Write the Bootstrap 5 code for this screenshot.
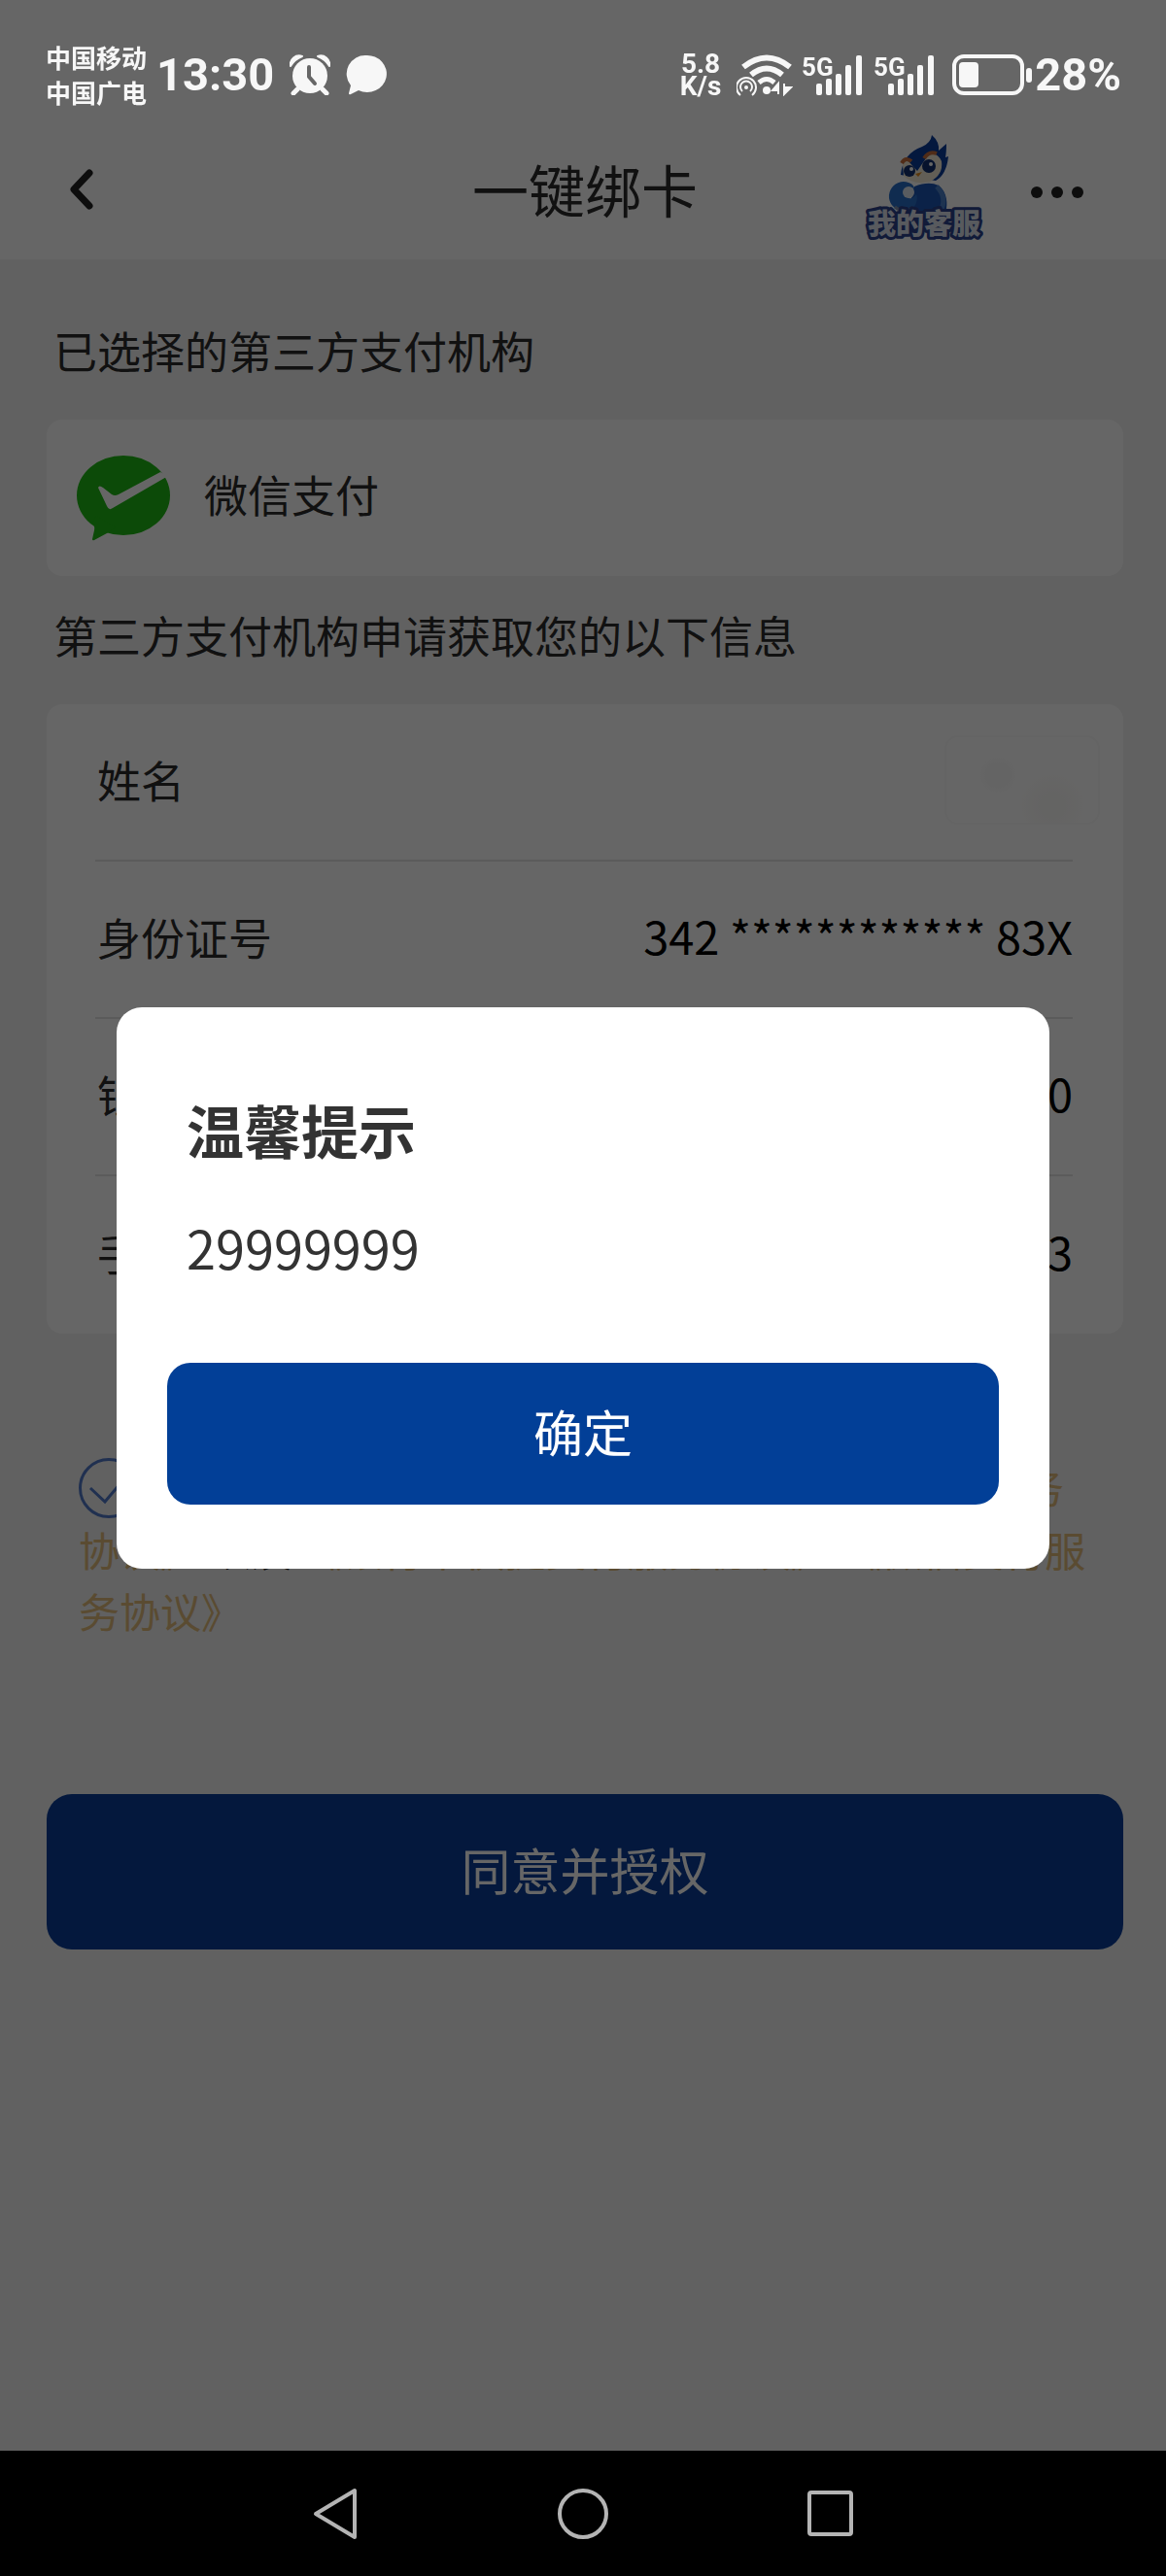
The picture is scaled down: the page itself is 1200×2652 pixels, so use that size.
<!DOCTYPE html>
<html lang="zh-CN">
<head>
<meta charset="utf-8">
<meta name="viewport" content="width=device-width, initial-scale=1">
<title>一键绑卡</title>
<link rel="stylesheet" href="https://cdn.jsdelivr.net/npm/bootstrap@5.3.0/dist/css/bootstrap.min.css">
<style>
  body { font-family: "Noto Sans CJK SC", "Noto Sans", sans-serif; font-size: 45px; line-height: 64px; color: #2b2b2b; background: #f2f2f2; }
  svg { display: block; flex: none; }
  .status-bar { position: relative; z-index: 1056; padding: 40px 46px 0 47px; height: 118px; color: #f7f7f7; font-weight: 700; }
  .status-left, .status-right { height: 74px; }
  .carrier { font-size: 26px; line-height: 36px; }
  .clock, .battery-level, .net-speed { font-family: Roboto, sans-serif; }
  .clock, .battery-level { font-size: 47px; line-height: 74px; }
  .clock { margin: 0 16px 0 10px; }
  .battery-level { margin-left: 1px; }
  .net-speed { font-size: 28px; line-height: 23px; }
  .bar-top { background: #fff; }
  .app-bar { height: 149px; padding: 10px 68px 0 72px; }
  .app-title { font-size: 58px; line-height: 80px; font-weight: 400; padding-bottom: 8px; }
  .side-slot { flex: 1 1 0; }
  .icon-btn { border: 0; background: none; padding: 0; }
  .content { padding: 0 44px 0 48px; }
  .section-title { font-size: 45px; line-height: 64px; font-weight: 400; margin: 0; padding: 62px 7px 39px; }
  .section-title.second { padding-top: 29px; }
  .panel { background: #fff; border-radius: 16px; }
  .provider { height: 161px; padding: 0 31px; gap: 34px; }
  .info { padding: 0 52px 0 50px; margin: 0; }
  .info-row { height: 162px; border-bottom: 2px solid #e4e4e4; padding-bottom: 4px; }
  .info-row:last-child { border-bottom: 0; }
  .info-row dt { font-weight: 400; padding-left: 2px; }
  .info-row dd { font-size: 47px; line-height: 60px; padding-bottom: 4px; color: #000; margin: 0; }
  .info-row .name-mask { width: 160px; height: 92px; border-radius: 14px; margin-right: -28px; border: 2px solid #fafafa;
    background: radial-gradient(circle at 34% 44%, #f9f9f9 0 8%, transparent 18%), radial-gradient(circle at 70% 80%, #fbfaf8 0 10%, transparent 28%), #fff; }
  .agreement { margin: 125px 33px 0; font-size: 42px; line-height: 63px; white-space: nowrap; }
  .agreement a { color: #e0bb7c; text-decoration: none; }
  .agree-box { appearance: none; width: 62px; height: 62px; margin: 3px 28px 0 0; border: 3px solid #5078c8; border-radius: 50%; vertical-align: top;
    background: url("data:image/svg+xml,%3Csvg xmlns='http://www.w3.org/2000/svg' viewBox='0 0 56 56'%3E%3Cpath d='M9 28l15 14 22-26' fill='none' stroke='%235078c8' stroke-width='3'/%3E%3C/svg%3E") center / 56px no-repeat; }
  .main-btn, .ok-btn { --bs-btn-color: #fff; border: 0; font-size: 51px; padding-bottom: 12px; }
  .main-btn { height: 160px; margin-top: 158px; border-radius: 26px; background: #0a3c98; --bs-btn-hover-bg: #0a3c98; }
  .ok-btn { height: 146px; border-radius: 24px; background: #023f97; --bs-btn-hover-bg: #023f97; }
  .system-nav { position: relative; z-index: 1056; height: 129px; background: #000; padding: 0 320px; }
  .modal-backdrop { --bs-backdrop-opacity: .6; }
  .modal-dialog { max-width: 80%; }
  .modal-content { border: 0; border-radius: 26px; padding: 84px 52px 66px; color: #333; }
  .tip-title { font-size: 59px; line-height: 84px; font-weight: 700; padding: 0 20px; margin: 0; }
  .tip-text { font-size: 54px; line-height: 76px; padding: 0 20px; margin: 41px 0 81px; }
</style>
<script src="https://cdn.jsdelivr.net/npm/bootstrap@5.3.0/dist/js/bootstrap.bundle.min.js"></script>
</head>
<body>
<div class="d-flex flex-column min-vh-100">
  <header class="bar-top">
    <div class="status-bar d-flex justify-content-between">
      <div class="status-left d-flex align-items-center">
        <div class="carrier">中国移动<br>中国广电</div>
        <div class="clock">13:30</div>
        <svg class="me-3" width="42" height="42" viewBox="0 0 42 42" fill="#f7f7f7"><path d="M1 12A9 9 0 0 1 13 2Q5 5 1 12ZM41 12A9 9 0 0 0 29 2Q37 5 41 12Z" stroke="#f7f7f7" stroke-width="2" stroke-linejoin="round"/><circle cx="21" cy="22" r="18"/><path d="M8 36l-4 4M34 36l4 4" stroke="#f7f7f7" stroke-width="5" stroke-linecap="round"/><path d="M20 13v10l6 7" fill="none" stroke="#666" stroke-width="4" stroke-linecap="round" stroke-linejoin="round"/></svg>
        <svg width="42" height="42" viewBox="0 0 42 42" fill="#f7f7f7"><path d="M21 1a20 19 0 1 1-8 36L5 41q-2 1-2-1l2-8A19 19 0 0 1 21 1Z"/></svg>
      </div>
      <div class="status-right d-flex align-items-center">
        <div class="net-speed text-center me-3">5.8<br>K/s</div>
        <svg width="58" height="44" viewBox="0 0 58 44" fill="none" stroke="#f7f7f7"><path d="M7 14Q31-5 55 14" stroke-width="6"/><path d="M15 22Q31 9 47 22" stroke-width="6"/><path d="M23 30Q31 23 39 30" stroke-width="5"/><circle cx="31" cy="38" r="4" fill="#f7f7f7" stroke="none"/><circle cx="10" cy="35" r="2" fill="#f7f7f7" stroke="none"/><path d="M6 39a6 6 0 1 1 8 0M4 43a10 10 0 1 1 12 0" stroke-width="2"/><path d="M43 42V31l-6 7h6M49 31v11l7-7h-7" fill="#f7f7f7" stroke-width="2"/></svg>
        <svg class="ms-2" width="66" height="44" viewBox="0 0 66 44" fill="#f7f7f7"><text x="1" y="23" font-size="26" font-family="Roboto" font-weight="700">5G</text><rect x="16" y="31" width="6" height="12" rx="2"/><rect x="26" y="26" width="6" height="17" rx="2"/><rect x="36" y="21" width="6" height="22" rx="2"/><rect x="46" y="12" width="6" height="31" rx="2"/><rect x="57" y="2" width="6" height="41" rx="2"/></svg>
        <svg class="ms-2" width="66" height="44" viewBox="0 0 66 44" fill="#f7f7f7"><text x="1" y="23" font-size="26" font-family="Roboto" font-weight="700">5G</text><rect x="16" y="31" width="6" height="12" rx="2"/><rect x="26" y="26" width="6" height="17" rx="2"/><rect x="36" y="21" width="6" height="22" rx="2"/><rect x="46" y="12" width="6" height="31" rx="2"/><rect x="57" y="2" width="6" height="41" rx="2"/></svg>
        <svg class="ms-3" width="84" height="44" viewBox="0 0 84 44"><rect x="2" y="3" width="70" height="38" rx="10" fill="none" stroke="#f7f7f7" stroke-width="4"/><rect x="7" y="9" width="20" height="26" rx="4" fill="#f7f7f7"/><rect x="76" y="15" width="6" height="15" rx="3" fill="#f7f7f7"/></svg>
        <div class="battery-level">28%</div>
      </div>
    </div>
    <div class="app-bar d-flex align-items-center">
      <div class="side-slot">
        <button class="icon-btn" type="button" aria-label="返回"><svg width="24" height="48" viewBox="0 -4 24 48"><path d="M20 5L4 22l16 17" fill="none" stroke="#222" stroke-width="7" stroke-linecap="round" stroke-linejoin="round"/></svg></button>
      </div>
      <h1 class="app-title m-0">一键绑卡</h1>
      <div class="side-slot d-flex align-items-center justify-content-end">
        <a href="#" aria-label="我的客服"><svg width="124" height="120" viewBox="0 0 124 120">
          <path d="M39 42Q41 20 61 13Q70 9 71 1Q79 8 78 17L86 10Q86 19 85 24L88 23Q86 42 75 48Z" fill="#0a3c9c"/>
          <path d="M41 32Q40 24 46 27L56 38L67 22Q76 17 81 28Q83 42 69 49Q52 53 42 43Z" fill="#f4ecd8"/>
          <path d="M40 30Q44 23 50 28M63 25Q68 17 76 20" fill="none" stroke="#c86e3c" stroke-width="4"/>
          <circle cx="48" cy="38" r="6" fill="#123070"/><circle cx="68" cy="33" r="7" fill="#123070"/><circle cx="50" cy="36" r="2" fill="#fff"/><circle cx="70" cy="31" r="2" fill="#fff"/>
          <path d="M54 41l7-2-4 5Z" fill="#e08a20"/>
          <path d="M53 54Q68 48 78 53Q88 61 86 77L78 86H55Q46 70 53 54Z" fill="#1c56b4"/>
          <path d="M76 54q12 12 3 27" fill="none" stroke="#4b7fc8" stroke-width="5"/>
          <path d="M47 50A15 15 0 1 0 54 73Q57 66 55 62Q52 67 47 66Q40 60 47 55Q52 54 53 59Q54 52 47 50Z" fill="#2a6fc8"/>
          <circle cx="47" cy="60" r="6" fill="#dfe6f0"/><path d="M33 75q8 7 19 1" fill="none" stroke="#7d8fae" stroke-width="3"/>
          <text x="63" y="103" text-anchor="middle" font-family="Noto Sans CJK SC" font-size="29" font-weight="900" fill="#dde2ec" stroke="#2c428c" stroke-width="6" stroke-linejoin="round" paint-order="stroke">我的客服</text>
        </svg></a>
        <button class="icon-btn ms-5 me-3" type="button" aria-label="更多"><svg width="56" height="14" viewBox="0 0 56 14" fill="#222"><circle cx="7" cy="7" r="6"/><circle cx="28" cy="7" r="6"/><circle cx="49" cy="7" r="6"/></svg></button>
      </div>
    </div>
  </header>

  <main class="content">
    <h2 class="section-title">已选择的第三方支付机构</h2>
    <div class="panel provider d-flex align-items-center">
      <svg width="97" height="90" viewBox="0 0 97 90"><g fill="#1eb914"><ellipse cx="48" cy="42" rx="48" ry="41"/><path d="M16 70q3 4 2 8l-2 9q0 2 2 1l13-7 9-6-20-12Z"/></g><path d="M22 34q1-3 5 0l9 7q3 2 7 0L86 18l8 4L37 55q-4 3-6-2Z" fill="#fff"/></svg>
      <span class="pb-2">微信支付</span>
    </div>
    <h2 class="section-title second">第三方支付机构申请获取您的以下信息</h2>
    <dl class="panel info">
      <div class="info-row d-flex align-items-center justify-content-between"><dt>姓名</dt><dd class="name-mask"></dd></div>
      <div class="info-row d-flex align-items-center justify-content-between"><dt>身份证号</dt><dd>342 ************ 83X</dd></div>
      <div class="info-row d-flex align-items-center justify-content-between"><dt>银行卡号</dt><dd>************ 0</dd></div>
      <div class="info-row d-flex align-items-center justify-content-between"><dt>手机号</dt><dd>****** 3</dd></div>
    </dl>
    <div class="agreement"><input class="agree-box" type="checkbox" id="agree" checked><label class="d-inline" for="agree">我已阅读并同意</label><a href="#">《第三方支付机构绑卡授权及服务<br>协议》</a> 以及 <a href="#">《银行卡快捷支付服务协议》</a> <a href="#">《微信支付服<br>务协议》</a></div>
    <button class="btn main-btn w-100" type="button">同意并授权</button>
  </main>

  <nav class="system-nav mt-auto d-flex align-items-center justify-content-between">
    <button class="icon-btn" type="button" aria-label="返回"><svg width="50" height="56" viewBox="0 0 50 56" fill="none" stroke="#b4b4b4" stroke-width="4" stroke-linejoin="round"><path d="M45 4v48L5 28Z"/></svg></button>
    <button class="icon-btn" type="button" aria-label="主页"><svg width="54" height="54" viewBox="0 0 54 54" fill="none" stroke="#b4b4b4" stroke-width="4"><circle cx="27" cy="27" r="24"/></svg></button>
    <button class="icon-btn" type="button" aria-label="最近任务"><svg width="50" height="50" viewBox="0 0 50 50" fill="none" stroke="#b4b4b4" stroke-width="4"><rect x="3" y="3" width="43" height="43" rx="2"/></svg></button>
  </nav>
</div>

<div class="modal-backdrop show"></div>
<div class="modal d-block" tabindex="-1" role="dialog" aria-labelledby="tipTitle">
  <div class="modal-dialog modal-dialog-centered">
    <div class="modal-content">
      <h2 class="tip-title" id="tipTitle">温馨提示</h2>
      <p class="tip-text">29999999</p>
      <button class="btn ok-btn w-100" type="button">确定</button>
    </div>
  </div>
</div>
</body>
</html>
